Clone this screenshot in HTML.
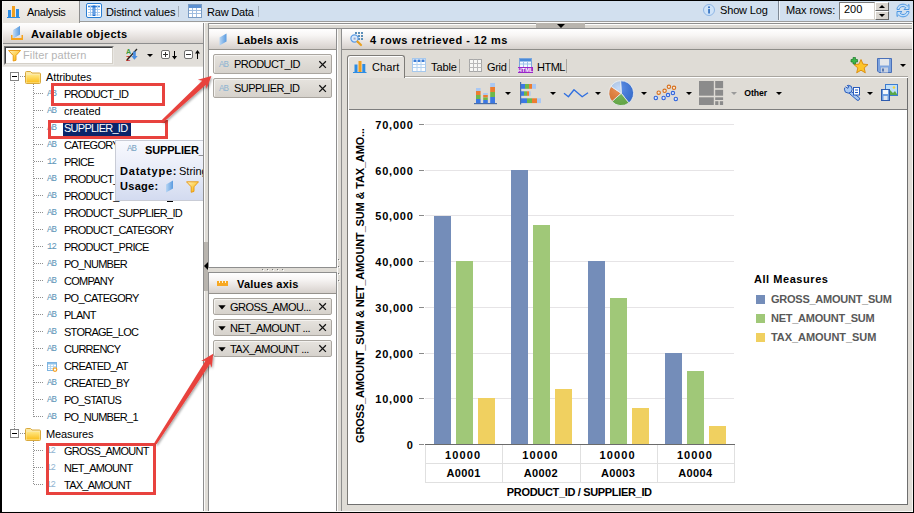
<!DOCTYPE html>
<html><head><meta charset="utf-8"><title>Analysis</title>
<style>
*{box-sizing:border-box;margin:0;padding:0}
html,body{width:914px;height:513px;overflow:hidden;background:#000}
body{font-family:"Liberation Sans",sans-serif;font-size:11px;color:#000;position:relative}
.a{position:absolute}
.tx{position:absolute;white-space:nowrap;line-height:13px;height:13px}
.b{font-weight:bold}
.hdr{background:linear-gradient(#ffffff 0%,#f8f6f5 30%,#e3dedb 75%,#d5d0cc 100%)}
.tree .tx{letter-spacing:-.74px}
.ic{position:absolute;left:47px;font-size:9px;color:#5c95b8;line-height:9px;height:9px;font-family:"Liberation Mono",monospace;letter-spacing:-.9px}
.dot{position:absolute;left:35px;width:9px;height:1px;background:repeating-linear-gradient(90deg,#999 0 1px,transparent 1px 2px)}
.chip{position:absolute;left:213px;width:119px;border:1px solid #aaa6a0;border-radius:2px;background:linear-gradient(#e6e3de,#d6d2cc);box-shadow:inset 1px 1px 0 #f4f2ef}
.chip .tx{letter-spacing:-.55px}
.x{position:absolute}
.dd{position:absolute;width:0;height:0;border-left:3.5px solid transparent;border-right:3.5px solid transparent;border-top:4px solid #000}
</style></head><body>
<!-- app background -->
<div class="a" style="left:2px;top:1px;width:911px;height:511px;background:#dfdcd6"></div>
<!-- top bar -->
<div class="a" style="left:2px;top:1px;width:911px;height:20px;background:#d2e0ef"></div>
<div class="a" style="left:2px;top:21px;width:911px;height:1px;background:#9c9c9c"></div>
<div class="a" style="left:2px;top:22px;width:911px;height:1px;background:#fbfbfa"></div>
<!-- active tab -->
<div class="a" style="left:3px;top:1px;width:77px;height:22px;background:linear-gradient(#f1efec,#e6e3de);border-right:1px solid #8e8e8e"></div>
<svg class="a" style="left:7px;top:4px" width="15" height="15" viewBox="0 0 15 15"><rect x="1" y="6" width="3" height="7" fill="#2d8de4"/><rect x="5" y="2" width="3" height="11" fill="#f0a020"/><rect x="9" y="5" width="3" height="8" fill="#2d8de4"/><rect x="0" y="13" width="13" height="1" fill="#2d8de4"/></svg>
<div class="tx" style="left:27px;top:6px;letter-spacing:-.3px">Analysis</div>
<!-- distinct values -->
<svg class="a" style="left:86px;top:3px" width="16" height="15" viewBox="0 0 16 15"><rect x=".5" y=".5" width="15" height="14" rx="1.5" fill="#fff" stroke="#2a7fd4"/><path d="M2 3.500h12" stroke="#3a86dc" stroke-width="1.600"/><path d="M2 6.500h12M2 9.500h12M2 12h12M4.500 2.500v10.500M11.500 2.500v10.500" stroke="#a9cbf0" stroke-width="1"/><rect x="6.600" y="2.500" width="2.800" height="10.500" fill="#1f6fd0"/><rect x="7.500" y="4.500" width="1" height="7.500" fill="#a9d0f8"/></svg>
<div class="tx" style="left:106px;top:6px;letter-spacing:-.1px">Distinct values</div>
<div class="a" style="left:178px;top:6px;width:1px;height:11px;background:#a3adb9"></div>
<svg class="a" style="left:188px;top:4px" width="14" height="14" viewBox="0 0 14 14"><rect x=".5" y=".5" width="13" height="13" fill="#fff" stroke="#7a9cc4"/><rect x="1" y="1" width="12" height="3" fill="#5b8fd0"/><g stroke="#9fbde0" stroke-width="1"><path d="M1 6.5h12M1 9.5h12M4.5 4v9M8.5 4v9"/></g></svg>
<div class="tx" style="left:207px;top:6px;letter-spacing:-.2px">Raw Data</div>
<div class="a" style="left:258px;top:6px;width:1px;height:11px;background:#a3adb9"></div>
<!-- right side -->
<svg class="a" style="left:703px;top:4px" width="12" height="12" viewBox="0 0 12 12"><circle cx="6" cy="6" r="5.500" fill="#cfe3f8" stroke="#8fb6e4"/><circle cx="6" cy="3.3" r="1" fill="#2f6fc0"/><rect x="5.2" y="5" width="1.7" height="4.5" fill="#2f6fc0"/></svg>
<div class="tx" style="left:720px;top:4px;letter-spacing:-.15px">Show Log</div>
<div class="a" style="left:778px;top:1px;width:1px;height:19px;background:#7f8995"></div>
<div class="a" style="left:779px;top:1px;width:1px;height:19px;background:#eef4fb"></div>
<div class="tx" style="left:786px;top:4px;letter-spacing:-.1px">Max rows:</div>
<div class="a" style="left:839px;top:2px;width:36px;height:18px;background:#fff;border:1px solid #7d7d7d;border-right-color:#d4d0c8;border-bottom-color:#d4d0c8"></div>
<div class="tx" style="left:844px;top:3px">200</div>
<div class="a" style="left:875px;top:2px;width:14px;height:9px;background:#d9d5cf;border:1px solid #fff;border-right-color:#666;border-bottom-color:#666"></div>
<div class="a" style="left:875px;top:11px;width:14px;height:9px;background:#d9d5cf;border:1px solid #fff;border-right-color:#666;border-bottom-color:#666"></div>
<div class="a" style="left:879px;top:5px;width:0;height:0;border-left:3px solid transparent;border-right:3px solid transparent;border-bottom:3px solid #000"></div>
<div class="a" style="left:879px;top:14px;width:0;height:0;border-left:3px solid transparent;border-right:3px solid transparent;border-top:3px solid #000"></div>
<svg class="a" style="left:896px;top:3px" width="14" height="15" viewBox="0 0 14 15"><g fill="#c4e0fa" stroke="#3f8fe0" stroke-width=".9" stroke-linejoin="round"><path id="ra" d="M1 6.500C1 3.200 4 1.200 7 1.200C9 1.200 10.500 2 11.300 3L13 1.500V6.500H8L9.800 4.700C9 3.900 8 3.500 7 3.500C5 3.500 3.300 4.800 3.300 6.500Z"/><path d="M1 6.500C1 3.200 4 1.200 7 1.200C9 1.200 10.500 2 11.300 3L13 1.500V6.500H8L9.800 4.700C9 3.900 8 3.500 7 3.500C5 3.500 3.300 4.800 3.300 6.500Z" transform="rotate(180 7 7.500)"/></g></svg>

<!--LEFT_S--><div class="a" style="left:2px;top:23px;width:201px;height:489px;background:#fff"></div>
<div class="a" style="left:203px;top:23px;width:1px;height:489px;background:#8e8e8e"></div>
<div class="a hdr" style="left:2px;top:23px;width:201px;height:20px"></div>
<div class="a" style="left:2px;top:43px;width:201px;height:1px;background:#8e8e8e"></div>
<div class="a" style="left:2px;top:44px;width:201px;height:23px;background:#e1ded9"></div>
<div class="a" style="left:2px;top:66px;width:201px;height:1px;background:#ebe9e5"></div>
<svg class="a" style="left:10px;top:25px" width="15" height="16" viewBox="0 0 15 16"><path d="M1 10v5h12v-5h-1.5v3h-9v-3z" fill="#f5a31f"/><path d="M3.5 5 L10 1 V9.5 L3.5 13z" fill="#8fbdec"/><path d="M3.5 5 L10 1 V9.5 L3.5 13z" fill="url(#gb)"/><defs><linearGradient id="gb" x1="0" x2="1"><stop offset="0" stop-color="#b8d6f4"/><stop offset="1" stop-color="#5a9be0"/></linearGradient></defs></svg>
<div class="tx b" style="left:31px;top:28px;letter-spacing:.42px">Available objects</div>
<div class="a" style="left:4px;top:46px;width:110px;height:19px;background:#fff;border:1px solid #7b7b7b;border-right-color:#e9e7e3;border-bottom-color:#e9e7e3"></div>
<div class="a" style="left:5px;top:47px;width:108px;height:17px;border:1px solid #3d3d3d;border-right-color:#d4d0c8;border-bottom-color:#d4d0c8"></div>
<svg class="a" style="left:8px;top:49px" width="13" height="13" viewBox="0 0 13 13"><path d="M.5 1.500h12L8 6.500v4.800L5.200 12V6.500z" fill="url(#gfu)" stroke="#e8960c" stroke-width=".9"/><defs><linearGradient id="gfu" x1="0" y1="0" x2="1" y2="1"><stop offset="0" stop-color="#fff3c4"/><stop offset=".6" stop-color="#fcc93a"/><stop offset="1" stop-color="#f7a81c"/></linearGradient></defs></svg>
<div class="tx" style="left:23px;top:49px;color:#b5b5b5;letter-spacing:.12px">Filter pattern</div>
<svg class="a" style="left:126px;top:48px" width="14" height="14" viewBox="0 0 14 14"><text x="0" y="6" font-size="7" font-weight="bold" fill="#3a9a3a" font-family="Liberation Sans">A</text><text x="0" y="13" font-size="7" font-weight="bold" fill="#c03030" font-family="Liberation Sans">Z</text><path d="M1 12 L11 1" stroke="#222" stroke-width="1.2"/><path d="M9 4v5h-2l3.5 4 3.5-4h-2V4z" fill="#4a8ee0" transform="translate(-1,0) scale(.9)"/></svg>
<div class="dd" style="left:147px;top:54px;border-left-width:3px;border-right-width:3px;border-top-width:3px"></div>
<div class="a" style="left:161px;top:50px;width:9px;height:9px;border:1px solid #6e6e6e;border-radius:2px;background:#fff"></div>
<div class="a" style="left:163px;top:54px;width:5px;height:1px;background:#333"></div>
<div class="a" style="left:165px;top:52px;width:1px;height:5px;background:#333"></div>
<svg class="a" style="left:171px;top:51px" width="7" height="9" viewBox="0 0 7 9"><path d="M3.500 0v6" stroke="#000" stroke-width="1"/><path d="M1 5h5L3.500 8.500z" fill="#000"/></svg>
<div class="a" style="left:184px;top:50px;width:9px;height:9px;border:1px solid #6e6e6e;border-radius:2px;background:#fff"></div>
<div class="a" style="left:186px;top:54px;width:5px;height:1px;background:#333"></div>
<svg class="a" style="left:194px;top:50px" width="7" height="9" viewBox="0 0 7 9"><path d="M3.500 3v6" stroke="#000" stroke-width="1"/><path d="M1 3.500h5L3.500 0z" fill="#000"/></svg>
<div class="tree">
<div class="a" style="left:14px;top:82px;width:1px;height:347px;background:repeating-linear-gradient(180deg,#8f8f8f 0 1px,transparent 1px 2px)"></div>
<div class="a" style="left:10px;top:72px;width:9px;height:9px;border:1px solid #848484;background:#fff"></div>
<div class="a" style="left:12px;top:76px;width:5px;height:1px;background:#000"></div>
<div class="a" style="left:20px;top:76px;width:5px;height:1px;background:repeating-linear-gradient(90deg,#8f8f8f 0 1px,transparent 1px 2px)"></div>
<svg class="a" style="left:25px;top:70px" width="16" height="14" viewBox="0 0 16 14"><path d="M.5 2.5a1 1 0 0 1 1-1h4l1.5 1.5h7.5a1 1 0 0 1 1 1v8.5a1 1 0 0 1-1 1h-13a1 1 0 0 1-1-1z" fill="#fce9a4" stroke="#d9a93c"/><path d="M1.5 5h13v7.5h-13z" fill="url(#gf)"/><defs><linearGradient id="gf" x1="0" y1="0" x2="0" y2="1"><stop offset="0" stop-color="#ffe680"/><stop offset="1" stop-color="#fbbf1e"/></linearGradient></defs></svg>
<div class="tx" style="left:46px;top:71px;letter-spacing:-.1px">Attributes</div>
<div class="a" style="left:33px;top:84px;width:1px;height:333px;background:repeating-linear-gradient(180deg,#8f8f8f 0 1px,transparent 1px 2px)"></div>
<div class="a" style="left:34px;top:93px;width:10px;height:1px;background:repeating-linear-gradient(90deg,#8f8f8f 0 1px,transparent 1px 2px)"></div>
<div class="ic" style="top:90px">AB</div>
<div class="tx" style="left:64px;top:88px">PRODUCT_ID</div>
<div class="a" style="left:34px;top:110px;width:10px;height:1px;background:repeating-linear-gradient(90deg,#8f8f8f 0 1px,transparent 1px 2px)"></div>
<div class="ic" style="top:107px">AB</div>
<div class="tx" style="left:64px;top:105px;letter-spacing:0">created</div>
<div class="a" style="left:34px;top:127px;width:10px;height:1px;background:repeating-linear-gradient(90deg,#8f8f8f 0 1px,transparent 1px 2px)"></div>
<div class="ic" style="top:124px">AB</div>
<div class="a" style="left:63px;top:122px;width:68px;height:14px;background:#0a246a"></div>
<div class="tx" style="left:64px;top:122px;color:#fff">SUPPLIER_ID</div>
<div class="a" style="left:34px;top:144px;width:10px;height:1px;background:repeating-linear-gradient(90deg,#8f8f8f 0 1px,transparent 1px 2px)"></div>
<div class="ic" style="top:141px">AB</div>
<div class="tx" style="left:64px;top:139px">CATEGORY</div>
<div class="a" style="left:34px;top:161px;width:10px;height:1px;background:repeating-linear-gradient(90deg,#8f8f8f 0 1px,transparent 1px 2px)"></div>
<div class="ic" style="top:158px">12</div>
<div class="tx" style="left:64px;top:156px">PRICE</div>
<div class="a" style="left:34px;top:178px;width:10px;height:1px;background:repeating-linear-gradient(90deg,#8f8f8f 0 1px,transparent 1px 2px)"></div>
<div class="ic" style="top:175px">AB</div>
<div class="tx" style="left:64px;top:173px">PRODUCT_</div>
<div class="a" style="left:34px;top:195px;width:10px;height:1px;background:repeating-linear-gradient(90deg,#8f8f8f 0 1px,transparent 1px 2px)"></div>
<div class="ic" style="top:192px">AB</div>
<div class="tx" style="left:64px;top:190px">PRODUCT_</div>
<div class="a" style="left:34px;top:212px;width:10px;height:1px;background:repeating-linear-gradient(90deg,#8f8f8f 0 1px,transparent 1px 2px)"></div>
<div class="ic" style="top:209px">AB</div>
<div class="tx" style="left:64px;top:207px">PRODUCT_SUPPLIER_ID</div>
<div class="a" style="left:34px;top:229px;width:10px;height:1px;background:repeating-linear-gradient(90deg,#8f8f8f 0 1px,transparent 1px 2px)"></div>
<div class="ic" style="top:226px">AB</div>
<div class="tx" style="left:64px;top:224px">PRODUCT_CATEGORY</div>
<div class="a" style="left:34px;top:246px;width:10px;height:1px;background:repeating-linear-gradient(90deg,#8f8f8f 0 1px,transparent 1px 2px)"></div>
<div class="ic" style="top:243px">12</div>
<div class="tx" style="left:64px;top:241px">PRODUCT_PRICE</div>
<div class="a" style="left:34px;top:263px;width:10px;height:1px;background:repeating-linear-gradient(90deg,#8f8f8f 0 1px,transparent 1px 2px)"></div>
<div class="ic" style="top:260px">AB</div>
<div class="tx" style="left:64px;top:258px">PO_NUMBER</div>
<div class="a" style="left:34px;top:280px;width:10px;height:1px;background:repeating-linear-gradient(90deg,#8f8f8f 0 1px,transparent 1px 2px)"></div>
<div class="ic" style="top:277px">AB</div>
<div class="tx" style="left:64px;top:275px">COMPANY</div>
<div class="a" style="left:34px;top:297px;width:10px;height:1px;background:repeating-linear-gradient(90deg,#8f8f8f 0 1px,transparent 1px 2px)"></div>
<div class="ic" style="top:294px">AB</div>
<div class="tx" style="left:64px;top:292px">PO_CATEGORY</div>
<div class="a" style="left:34px;top:314px;width:10px;height:1px;background:repeating-linear-gradient(90deg,#8f8f8f 0 1px,transparent 1px 2px)"></div>
<div class="ic" style="top:311px">AB</div>
<div class="tx" style="left:64px;top:309px">PLANT</div>
<div class="a" style="left:34px;top:331px;width:10px;height:1px;background:repeating-linear-gradient(90deg,#8f8f8f 0 1px,transparent 1px 2px)"></div>
<div class="ic" style="top:328px">AB</div>
<div class="tx" style="left:64px;top:326px">STORAGE_LOC</div>
<div class="a" style="left:34px;top:348px;width:10px;height:1px;background:repeating-linear-gradient(90deg,#8f8f8f 0 1px,transparent 1px 2px)"></div>
<div class="ic" style="top:345px">AB</div>
<div class="tx" style="left:64px;top:343px">CURRENCY</div>
<div class="a" style="left:34px;top:365px;width:10px;height:1px;background:repeating-linear-gradient(90deg,#8f8f8f 0 1px,transparent 1px 2px)"></div>
<svg class="a" style="left:47px;top:362px" width="11" height="11" viewBox="0 0 11 11"><rect x=".5" y=".5" width="9" height="8" fill="#fff" stroke="#7fb4e0"/><rect x="1" y="1" width="8" height="1.500" fill="#8ec2ea"/><path d="M1 4.500h8M1 6.500h8M3.500 2.500v6M6.500 2.500v6" stroke="#a9d0ee" stroke-width=".8"/><circle cx="8" cy="7.600" r="1.800" fill="#fff" stroke="#f5a020" stroke-width="1.200"/></svg>
<div class="tx" style="left:64px;top:360px">CREATED_AT</div>
<div class="a" style="left:34px;top:382px;width:10px;height:1px;background:repeating-linear-gradient(90deg,#8f8f8f 0 1px,transparent 1px 2px)"></div>
<div class="ic" style="top:379px">AB</div>
<div class="tx" style="left:64px;top:377px">CREATED_BY</div>
<div class="a" style="left:34px;top:399px;width:10px;height:1px;background:repeating-linear-gradient(90deg,#8f8f8f 0 1px,transparent 1px 2px)"></div>
<div class="ic" style="top:396px">AB</div>
<div class="tx" style="left:64px;top:394px">PO_STATUS</div>
<div class="a" style="left:34px;top:416px;width:10px;height:1px;background:repeating-linear-gradient(90deg,#8f8f8f 0 1px,transparent 1px 2px)"></div>
<div class="ic" style="top:413px">AB</div>
<div class="tx" style="left:64px;top:411px">PO_NUMBER_1</div>
<div class="a" style="left:10px;top:429px;width:9px;height:9px;border:1px solid #848484;background:#fff"></div>
<div class="a" style="left:12px;top:433px;width:5px;height:1px;background:#000"></div>
<div class="a" style="left:20px;top:433px;width:5px;height:1px;background:repeating-linear-gradient(90deg,#8f8f8f 0 1px,transparent 1px 2px)"></div>
<svg class="a" style="left:25px;top:427px" width="16" height="14" viewBox="0 0 16 14"><path d="M.5 2.5a1 1 0 0 1 1-1h4l1.5 1.5h7.5a1 1 0 0 1 1 1v8.5a1 1 0 0 1-1 1h-13a1 1 0 0 1-1-1z" fill="#fce9a4" stroke="#d9a93c"/><path d="M1.5 5h13v7.5h-13z" fill="url(#gf)"/><defs><linearGradient id="gf" x1="0" y1="0" x2="0" y2="1"><stop offset="0" stop-color="#ffe680"/><stop offset="1" stop-color="#fbbf1e"/></linearGradient></defs></svg>
<div class="tx" style="left:46px;top:428px;letter-spacing:-.1px">Measures</div>
<div class="a" style="left:33px;top:441px;width:1px;height:44px;background:repeating-linear-gradient(180deg,#8f8f8f 0 1px,transparent 1px 2px)"></div>
<div class="a" style="left:34px;top:450px;width:10px;height:1px;background:repeating-linear-gradient(90deg,#8f8f8f 0 1px,transparent 1px 2px)"></div>
<div class="ic" style="top:447px;left:46px;color:#8fb5d2">12</div>
<div class="tx" style="left:64px;top:445px">GROSS_AMOUNT</div>
<div class="a" style="left:34px;top:467px;width:10px;height:1px;background:repeating-linear-gradient(90deg,#8f8f8f 0 1px,transparent 1px 2px)"></div>
<div class="ic" style="top:464px;left:46px;color:#8fb5d2">12</div>
<div class="tx" style="left:64px;top:462px">NET_AMOUNT</div>
<div class="a" style="left:34px;top:484px;width:10px;height:1px;background:repeating-linear-gradient(90deg,#8f8f8f 0 1px,transparent 1px 2px)"></div>
<div class="ic" style="top:481px;left:46px;color:#8fb5d2">12</div>
<div class="tx" style="left:64px;top:479px">TAX_AMOUNT</div>
</div>
<div class="a" style="left:0;top:0;width:203px;height:513px;overflow:hidden">
<div class="a" style="left:115px;top:140px;width:88px;height:61px;background:linear-gradient(#f8f9fe,#e6eaf7 55%,#d3dbf0);border:1px solid #c9ccd6;border-right:none"></div>
<div class="ic" style="left:127px;top:145px;color:#7aa5c4">AB</div>
<div class="a" style="left:167px;top:201px;width:6px;height:1px;background:#000"></div>
<div class="tx b" style="left:145px;top:144px;letter-spacing:-.15px">SUPPLIER_</div>
<div class="tx b" style="left:120px;top:165px;letter-spacing:.8px">Datatype:</div>
<div class="tx" style="left:179px;top:165px">String</div>
<div class="tx b" style="left:120px;top:180px;letter-spacing:.3px">Usage:</div>
<svg class="a" style="left:165px;top:180px" width="9" height="13" viewBox="0 0 9 13"><path d="M1 4.5 L8 .5 V8.5 L1 12.5z" fill="url(#gb)"/></svg>
<svg class="a" style="left:186px;top:181px" width="13" height="12" viewBox="0 0 13 12"><path d="M.5 .8h12L8 5.800v4.600L5.200 11.300V5.800z" fill="url(#gfu)" stroke="#e8960c" stroke-width=".9"/></svg>
</div><!--LEFT_E-->
<!--MID_S--><div class="a" style="left:204px;top:23px;width:1px;height:488px;background:#fbfaf9"></div>
<div class="a" style="left:337px;top:29px;width:1px;height:482px;background:#fbfaf9"></div>
<div class="a" style="left:204px;top:242px;width:4px;height:49px;background:#b8b4ae"></div>
<div class="a" style="left:204px;top:262px;width:0;height:0;border-top:4px solid transparent;border-bottom:4px solid transparent;border-right:4px solid #000"></div>
<div class="a" style="left:208px;top:23px;width:705px;height:6px;background:linear-gradient(#fdfdfc 0,#fdfdfc 1px,#dddad4 1px,#dddad4 100%);border:1px solid #8e8e8e;border-bottom:none;border-right:none"></div>
<div class="a" style="left:208px;top:28px;width:129px;height:240px;background:#fff;border:1px solid #8e8e8e"></div>
<div class="a hdr" style="left:209px;top:29px;width:127px;height:20px"></div>
<div class="a" style="left:209px;top:49px;width:127px;height:1px;background:#95928d"></div>
<svg class="a" style="left:219px;top:33px" width="8" height="13" viewBox="0 0 8 13"><path d="M.5 4.5 L7.5 .5 V8.5 L.5 12.5z" fill="url(#gb)"/></svg>
<div class="tx b" style="left:237px;top:34px;letter-spacing:.2px">Labels axis</div>
<div class="a" style="left:208px;top:272px;width:129px;height:241px;background:#fff;border:1px solid #8e8e8e"></div>
<div class="a hdr" style="left:209px;top:273px;width:127px;height:20px"></div>
<div class="a" style="left:209px;top:293px;width:127px;height:1px;background:#95928d"></div>
<svg class="a" style="left:217px;top:281px" width="11" height="5" viewBox="0 0 11 5"><path d="M0 0h11v5H0z" fill="#f7a823"/><path d="M2.5 0v2M5.5 0v2M8.5 0v2" stroke="#fff3d6" stroke-width="1"/></svg>
<div class="tx b" style="left:237px;top:278px;letter-spacing:.2px">Values axis</div>
<div class="a" style="left:262px;top:269px;width:22px;height:1px;background:repeating-linear-gradient(90deg,#777 0 1px,transparent 1px 5px)"></div>
<div class="a" style="left:263px;top:270px;width:22px;height:1px;background:repeating-linear-gradient(90deg,#fff 0 1px,transparent 1px 5px)"></div>
<div class="a" style="left:338px;top:259px;width:1px;height:22px;background:repeating-linear-gradient(180deg,#777 0 1px,transparent 1px 7px)"></div>
<div class="a" style="left:339px;top:260px;width:1px;height:22px;background:repeating-linear-gradient(180deg,#fff 0 1px,transparent 1px 7px)"></div>
<div class="chip" style="top:54px;height:20px">
<div class="ic" style="left:5px;top:6px;color:#8fb5d2;font-size:9px;letter-spacing:-.9px">AB</div>
<div class="tx" style="left:20px;top:3px">PRODUCT_ID</div>
<svg class="a" style="left:104px;top:5px" width="9" height="9" viewBox="0 0 9 9"><path d="M1.300 1.300l6.600 6.600M7.900 1.300l-6.600 6.600" stroke="#111" stroke-width="1.25"/></svg>
</div>
<div class="chip" style="top:78px;height:20px">
<div class="ic" style="left:5px;top:6px;color:#8fb5d2;font-size:9px;letter-spacing:-.9px">AB</div>
<div class="tx" style="left:20px;top:3px">SUPPLIER_ID</div>
<svg class="a" style="left:104px;top:5px" width="9" height="9" viewBox="0 0 9 9"><path d="M1.300 1.300l6.600 6.600M7.900 1.300l-6.600 6.600" stroke="#111" stroke-width="1.25"/></svg>
</div>
<div class="chip" style="top:298px;height:17px">
<svg class="a" style="left:4px;top:6px" width="8" height="5" viewBox="0 0 8 5"><path d="M.3 .3h7.400L4 4.500z" fill="#000"/></svg>
<div class="tx" style="left:16px;top:2px">GROSS_AMOU...</div>
<svg class="a" style="left:104px;top:3px" width="9" height="9" viewBox="0 0 9 9"><path d="M1.300 1.300l6.600 6.600M7.900 1.300l-6.600 6.600" stroke="#111" stroke-width="1.25"/></svg>
</div>
<div class="chip" style="top:319px;height:17px">
<svg class="a" style="left:4px;top:6px" width="8" height="5" viewBox="0 0 8 5"><path d="M.3 .3h7.400L4 4.500z" fill="#000"/></svg>
<div class="tx" style="left:16px;top:2px">NET_AMOUNT ...</div>
<svg class="a" style="left:104px;top:3px" width="9" height="9" viewBox="0 0 9 9"><path d="M1.300 1.300l6.600 6.600M7.900 1.300l-6.600 6.600" stroke="#111" stroke-width="1.25"/></svg>
</div>
<div class="chip" style="top:340px;height:17px">
<svg class="a" style="left:4px;top:6px" width="8" height="5" viewBox="0 0 8 5"><path d="M.3 .3h7.400L4 4.500z" fill="#000"/></svg>
<div class="tx" style="left:16px;top:2px">TAX_AMOUNT ...</div>
<svg class="a" style="left:104px;top:3px" width="9" height="9" viewBox="0 0 9 9"><path d="M1.300 1.300l6.600 6.600M7.900 1.300l-6.600 6.600" stroke="#111" stroke-width="1.25"/></svg>
</div><!--MID_E-->
<!--CHART_S--><div class="a" style="left:536px;top:23px;width:49px;height:5px;background:#b8b4ae"></div>
<div class="a" style="left:557px;top:24px;width:0;height:0;border-left:4px solid transparent;border-right:4px solid transparent;border-top:4px solid #000"></div>
<div class="a" style="left:341px;top:28px;width:572px;height:485px;background:#dfdcd6;border:1px solid #8e8e8e;border-right:none;border-bottom:none"></div>
<div class="a hdr" style="left:342px;top:29px;width:571px;height:20px"></div>
<div class="a" style="left:342px;top:49px;width:571px;height:1px;background:#8e8c88"></div>
<svg class="a" style="left:350px;top:32px" width="14" height="15" viewBox="0 0 14 15"><g fill="#5d8fb8"><rect x="5" y="0" width="2" height="2"/><rect x="8" y="0" width="2" height="2"/><rect x="11" y="0" width="2" height="2"/><rect x="8" y="3" width="2" height="2"/><rect x="11" y="3" width="2" height="2"/><rect x="11" y="6" width="2" height="2"/><rect x="8" y="6" width="2" height="2"/></g><circle cx="4.5" cy="6.5" r="3.6" fill="#dcebfa" stroke="#5b9be6" stroke-width="1.2"/><rect x="3.6" y="5.6" width="2" height="2" fill="#9aa4c8"/><path d="M7.5 9.5l3.5 3.5" stroke="#e8a020" stroke-width="2.2" stroke-linecap="round"/></svg>
<div class="tx b" style="left:370px;top:34px;letter-spacing:.52px">4 rows retrieved - 12 ms</div>
<div class="a" style="left:348px;top:77px;width:560px;height:1px;background:#fff"></div>
<div class="a" style="left:347px;top:55px;width:58px;height:23px;background:#e4e1dc;border:1px solid #7d7b77;border-bottom:none;border-radius:3px 3px 0 0;box-shadow:inset 1px 1px 0 #fff"></div>
<div class="a" style="left:347px;top:78px;width:1px;height:427px;background:#7d7b77"></div>
<div class="a" style="left:348px;top:78px;width:1px;height:426px;background:#fff"></div>
<div class="a" style="left:907px;top:78px;width:1px;height:427px;background:#6f6f6f"></div>
<div class="a" style="left:347px;top:504px;width:561px;height:1px;background:#6f6f6f"></div>
<div class="a" style="left:349px;top:109px;width:558px;height:1px;background:#7e7e7e"></div>
<div class="a" style="left:349px;top:110px;width:558px;height:394px;background:#fff"></div>
<div class="a" style="left:342px;top:511px;width:571px;height:1px;background:#f6f5f3"></div>
<div class="a" style="left:912px;top:23px;width:1px;height:489px;background:#f6f5f3"></div>
<div class="a" style="left:405px;top:76px;width:503px;height:1px;background:#a9a6a0"></div>
<div class="a" style="left:337px;top:28px;width:4px;height:1px;background:#8e8e8e"></div>
<svg class="a" style="left:353px;top:60px" width="14" height="14" viewBox="0 0 14 14"><rect x="1.500" y="4.500" width="3" height="7.500" fill="#2d8de4"/><rect x="5.500" y="1" width="3" height="11" fill="#f0a020"/><rect x="9.300" y="4" width="3" height="8" fill="#2d8de4"/><rect x="0" y="12" width="13.500" height="1" fill="#2d8de4"/></svg>
<div class="tx" style="left:372px;top:61px;letter-spacing:.1px">Chart</div>
<svg class="a" style="left:412px;top:58px" width="14" height="14" viewBox="0 0 14 14"><rect x=".5" y=".5" width="13" height="13" fill="#fbfdff" stroke="#a6c8ec"/><rect x="1.500" y="1.500" width="3" height="2.500" fill="#3d7fd8"/><rect x="5.500" y="1.500" width="3" height="2.500" fill="#3d7fd8"/><rect x="9.500" y="1.500" width="3" height="2.500" fill="#3d7fd8"/><path d="M1 6.500h12M1 9.500h12M5 4v9M9 4v9" stroke="#b4d2f0" stroke-width="1"/></svg>
<div class="tx" style="left:431px;top:61px;letter-spacing:-.1px">Table</div>
<div class="a" style="left:459px;top:59px;width:1px;height:14px;background:#a9a6a0"></div>
<svg class="a" style="left:469px;top:59px" width="13" height="13" viewBox="0 0 13 13"><rect x=".5" y=".5" width="12" height="12" fill="#f7f7f5" stroke="#a8a8a8"/><path d="M.5 4.5h12M.5 8.5h12M4.5 .5v12M8.5 .5v12" stroke="#b8b8b8" stroke-width="1"/></svg>
<div class="tx" style="left:487px;top:61px;letter-spacing:-.3px">Grid</div>
<div class="a" style="left:509px;top:59px;width:1px;height:14px;background:#a9a6a0"></div>
<svg class="a" style="left:518px;top:58px" width="15" height="16" viewBox="0 0 15 16"><rect x="1.5" y=".5" width="12" height="9" fill="#f4f9ff" stroke="#7aa6dc"/><rect x="2" y="1" width="11" height="2.5" fill="#4a8ad8"/><path d="M2 6h11M5.5 3.5v6M9.5 3.5v6" stroke="#9cc0ea" stroke-width="1"/><rect x="0" y="9" width="15" height="6" fill="#9a28c8"/><text x="7.5" y="14" font-size="5.5" font-weight="bold" fill="#fff" text-anchor="middle" font-family="Liberation Sans">HTML</text></svg>
<div class="tx" style="left:537px;top:61px;letter-spacing:-.5px">HTML</div>
<div class="a" style="left:566px;top:59px;width:1px;height:14px;background:#a9a6a0"></div>
<svg class="a" style="left:850px;top:56px" width="19" height="18" viewBox="0 0 19 18"><path d="M11 3.5l2 4.6 5 .5-3.8 3.3 1.1 4.9L11 14.2 6.7 16.8l1.1-4.9L4 8.600l5-.5z" fill="#fdc52a" stroke="#d98a0a" stroke-width=".9"/><path d="M3 1.5h2.500v2h2v2.500h-2v2H3v-2H1V3.500h2z" fill="#3cb84a" stroke="#1d7a2a" stroke-width=".7"/></svg>
<svg class="a" style="left:877px;top:58px" width="15" height="15" viewBox="0 0 15 15"><path d="M.5 .5h14v14H2l-1.500-1.500z" fill="#7ea4de" stroke="#4a70b8"/><rect x="3" y="1" width="9" height="6.500" fill="#e4e6ea"/><rect x="4" y="9.500" width="7" height="5" fill="#c9d2e2"/><rect x="5" y="10.500" width="2" height="3" fill="#5a78b0"/></svg>
<div class="dd" style="left:900px;top:64px;border-left-width:3px;border-right-width:3px;border-top-width:3px"></div>
<svg class="a" style="left:0;top:0" width="914" height="513" viewBox="0 0 914 513"><rect x="476" y="88" width="4.6" height="3" fill="#a9c8f4"/><rect x="476" y="91" width="4.6" height="4" fill="#ec7c30"/><rect x="476" y="95" width="4.6" height="4" fill="#6db84a"/><rect x="476" y="99" width="4.6" height="4" fill="#3b78e4"/><rect x="483.2" y="93" width="4.6" height="2" fill="#a9c8f4"/><rect x="483.2" y="95" width="4.6" height="2.5" fill="#ec7c30"/><rect x="483.2" y="97.5" width="4.6" height="2.5" fill="#6db84a"/><rect x="483.2" y="100" width="4.6" height="3" fill="#3b78e4"/><rect x="490.2" y="83" width="4.8" height="4" fill="#a9c8f4"/><rect x="490.2" y="87" width="4.8" height="5" fill="#ec7c30"/><rect x="490.2" y="92" width="4.8" height="5" fill="#6db84a"/><rect x="490.2" y="97" width="4.8" height="6" fill="#3b78e4"/><rect x="474" y="103" width="23" height="1.2" fill="#4a6ea8"/><rect x="521" y="84" width="4" height="4.8" fill="#3b78e4"/><rect x="525" y="84" width="4" height="4.8" fill="#6db84a"/><rect x="529" y="84" width="3" height="4.8" fill="#ec7c30"/><rect x="532" y="84" width="4" height="4.8" fill="#a9c8f4"/><rect x="521" y="91.3" width="3" height="4.5" fill="#3b78e4"/><rect x="524" y="91.3" width="3" height="4.5" fill="#6db84a"/><rect x="527" y="91.3" width="2" height="4.5" fill="#ec7c30"/><rect x="529" y="91.3" width="1.6000000000000227" height="4.5" fill="#a9c8f4"/><rect x="521" y="98.3" width="6" height="4.8" fill="#3b78e4"/><rect x="527" y="98.3" width="5" height="4.8" fill="#6db84a"/><rect x="532" y="98.3" width="5" height="4.8" fill="#ec7c30"/><rect x="537" y="98.3" width="4" height="4.8" fill="#a9c8f4"/><rect x="520" y="82" width="1.2" height="22.5" fill="#4a6ea8"/><path d="M564 93.3L568.4 96.7L574 89.8L582.2 96.7L588 92.7" fill="none" stroke="#2f6fe0" stroke-width="1.35" stroke-linejoin="round"/><defs><radialGradient id="pg" cx=".4" cy=".3" r=".8"><stop offset="0" stop-color="#fff" stop-opacity=".22"/><stop offset="1" stop-color="#000" stop-opacity=".12"/></radialGradient></defs><path d="M621.2 93.2L620.55 80.82A12.4 12.4 0 0 1 628.83 102.97Z" fill="#3a78e6" stroke="#f2f6fb" stroke-width=".9" stroke-linejoin="round"/><path d="M621.2 93.2L628.83 102.97A12.4 12.4 0 0 1 611.99 101.50Z" fill="#6cb84a" stroke="#f2f6fb" stroke-width=".9" stroke-linejoin="round"/><path d="M621.2 93.2L611.99 101.50A12.4 12.4 0 0 1 610.92 86.27Z" fill="#ec7c30" stroke="#f2f6fb" stroke-width=".9" stroke-linejoin="round"/><path d="M621.2 93.2L610.92 86.27A12.4 12.4 0 0 1 620.55 80.82Z" fill="#b4d0f6" stroke="#f2f6fb" stroke-width=".9" stroke-linejoin="round"/><circle cx="621.2" cy="93.2" r="12.4" fill="url(#pg)"/><circle cx="658.7" cy="92.7" r="1.7" fill="#f8e8d8" stroke="#d8701c" stroke-width="1.1"/><circle cx="664.6" cy="90.8" r="1.7" fill="#f8e8d8" stroke="#d8701c" stroke-width="1.1"/><circle cx="668.9" cy="86.8" r="1.7" fill="#f8e8d8" stroke="#d8701c" stroke-width="1.1"/><circle cx="674" cy="87.8" r="1.7" fill="#f8e8d8" stroke="#d8701c" stroke-width="1.1"/><circle cx="655.8" cy="98" r="1.7" fill="#dce8fb" stroke="#2f63dc" stroke-width="1.1"/><circle cx="663.6" cy="98" r="1.7" fill="#dce8fb" stroke="#2f63dc" stroke-width="1.1"/><circle cx="668" cy="95.1" r="1.7" fill="#dce8fb" stroke="#2f63dc" stroke-width="1.1"/><circle cx="672.9" cy="93.1" r="1.7" fill="#dce8fb" stroke="#2f63dc" stroke-width="1.1"/><circle cx="675.8" cy="99" r="1.7" fill="#dce8fb" stroke="#2f63dc" stroke-width="1.1"/><rect x="699" y="81" width="14.8" height="14.7" fill="#8b8b8b"/><rect x="699" y="97.3" width="14.8" height="7.7" fill="#8b8b8b"/><rect x="715.2" y="81" width="7.9" height="7.2" fill="#8b8b8b"/><rect x="715.2" y="89.8" width="7.9" height="5.9" fill="#8b8b8b"/><rect x="715.2" y="97.3" width="7.9" height="2.7" fill="#8b8b8b"/><rect x="715.2" y="101.2" width="3.2" height="3.8" fill="#8b8b8b"/><rect x="719.8" y="101.2" width="3.3" height="3.8" fill="#8b8b8b"/></svg>
<div class="dd" style="left:505px;top:92px;border-left-width:3px;border-right-width:3px;border-top-width:3px;border-top-color:#000"></div>
<div class="dd" style="left:550px;top:92px;border-left-width:3px;border-right-width:3px;border-top-width:3px;border-top-color:#000"></div>
<div class="dd" style="left:595px;top:92px;border-left-width:3px;border-right-width:3px;border-top-width:3px;border-top-color:#000"></div>
<div class="dd" style="left:640.5px;top:92px;border-left-width:3px;border-right-width:3px;border-top-width:3px;border-top-color:#000"></div>
<div class="dd" style="left:685.5px;top:92px;border-left-width:3px;border-right-width:3px;border-top-width:3px;border-top-color:#000"></div>
<div class="dd" style="left:731px;top:92px;border-left-width:3px;border-right-width:3px;border-top-width:3px;border-top-color:#9a9a9a"></div>
<div class="tx b" style="left:744.3px;top:86.5px;font-size:8.700px;letter-spacing:-.1px">Other</div>
<div class="dd" style="left:775.5px;top:92px;border-left-width:3px;border-right-width:3px;border-top-width:3px;border-top-color:#000"></div>
<svg class="a" style="left:840px;top:80px" width="24" height="24" viewBox="840 80 24 24"><path d="M850 90.500L859.300 97.700a1.700 1.700 0 0 1-2.300 2.400L848.300 92.500z" fill="#a9c9f2" stroke="#2a5cbc" stroke-width="1"/><circle cx="848.300" cy="89.200" r="3.900" fill="#a9c9f2" stroke="#2a5cbc" stroke-width="1"/><path d="M848.300 89.200L842 86.500L845.500 82z" fill="#dfdcd6"/><path d="M845.300 86.800l2.600 1.600 1-2.800" fill="none" stroke="#2a5cbc" stroke-width="1"/><rect x="853.500" y="87.500" width="6" height="7.500" fill="#fff" stroke="#2a5cbc" stroke-width="1"/><path d="M855 90h3M855 92.500h3" stroke="#2a5cbc" stroke-width="1"/></svg>
<div class="dd" style="left:867px;top:92px;border-left-width:3px;border-right-width:3px;border-top-width:3px;border-top-color:#000"></div>
<svg class="a" style="left:881px;top:84px" width="17" height="17" viewBox="0 0 17 17"><rect x="4.500" y=".500" width="12" height="11" fill="#bfe0f8" stroke="#3b7bd0"/><path d="M5 11l4-5 3 3 2-2 2.500 4z" fill="#5aa848"/><circle cx="13" cy="3.500" r="1.300" fill="#f6d23c"/><rect x=".500" y="5.500" width="8" height="11" fill="#6f9fe0" stroke="#2f5cae"/><rect x="2" y="6" width="5" height="4" fill="#f4f7fc"/><rect x="2.500" y="12" width="4" height="4" fill="#dfe6f2"/></svg>
<div class="a" style="left:419px;top:444px;width:5px;height:1px;background:#8a8a8a"></div>
<div class="tx b cl" style="left:350px;width:63.600px;text-align:right;top:439px;letter-spacing:.78px;margin-right:-.78px">0</div>
<div class="a" style="left:425px;top:398px;width:309px;height:1px;background:#e6e4e6"></div>
<div class="a" style="left:419px;top:398px;width:5px;height:1px;background:#8a8a8a"></div>
<div class="tx b cl" style="left:350px;width:63.600px;text-align:right;top:393px;letter-spacing:.78px;margin-right:-.78px">10,000</div>
<div class="a" style="left:425px;top:353px;width:309px;height:1px;background:#e6e4e6"></div>
<div class="a" style="left:419px;top:353px;width:5px;height:1px;background:#8a8a8a"></div>
<div class="tx b cl" style="left:350px;width:63.600px;text-align:right;top:348px;letter-spacing:.78px;margin-right:-.78px">20,000</div>
<div class="a" style="left:425px;top:307px;width:309px;height:1px;background:#e6e4e6"></div>
<div class="a" style="left:419px;top:307px;width:5px;height:1px;background:#8a8a8a"></div>
<div class="tx b cl" style="left:350px;width:63.600px;text-align:right;top:302px;letter-spacing:.78px;margin-right:-.78px">30,000</div>
<div class="a" style="left:425px;top:261px;width:309px;height:1px;background:#e6e4e6"></div>
<div class="a" style="left:419px;top:261px;width:5px;height:1px;background:#8a8a8a"></div>
<div class="tx b cl" style="left:350px;width:63.600px;text-align:right;top:256px;letter-spacing:.78px;margin-right:-.78px">40,000</div>
<div class="a" style="left:425px;top:215px;width:309px;height:1px;background:#e6e4e6"></div>
<div class="a" style="left:419px;top:215px;width:5px;height:1px;background:#8a8a8a"></div>
<div class="tx b cl" style="left:350px;width:63.600px;text-align:right;top:210px;letter-spacing:.78px;margin-right:-.78px">50,000</div>
<div class="a" style="left:425px;top:170px;width:309px;height:1px;background:#e6e4e6"></div>
<div class="a" style="left:419px;top:170px;width:5px;height:1px;background:#8a8a8a"></div>
<div class="tx b cl" style="left:350px;width:63.600px;text-align:right;top:165px;letter-spacing:.78px;margin-right:-.78px">60,000</div>
<div class="a" style="left:425px;top:124px;width:309px;height:1px;background:#e6e4e6"></div>
<div class="a" style="left:419px;top:124px;width:5px;height:1px;background:#8a8a8a"></div>
<div class="tx b cl" style="left:350px;width:63.600px;text-align:right;top:119px;letter-spacing:.78px;margin-right:-.78px">70,000</div>
<div class="a" style="left:434px;top:215.60px;width:17px;height:228.40px;background:#748db9"></div>
<div class="a" style="left:456px;top:261.32px;width:17px;height:182.68px;background:#a0c878"></div>
<div class="a" style="left:478px;top:398.48px;width:17px;height:45.52px;background:#f0d060"></div>
<div class="a" style="left:511px;top:169.88px;width:17px;height:274.12px;background:#748db9"></div>
<div class="a" style="left:533px;top:224.74px;width:17px;height:219.26px;background:#a0c878"></div>
<div class="a" style="left:555px;top:389.34px;width:17px;height:54.66px;background:#f0d060"></div>
<div class="a" style="left:588px;top:261.32px;width:17px;height:182.68px;background:#748db9"></div>
<div class="a" style="left:610px;top:297.90px;width:17px;height:146.10px;background:#a0c878"></div>
<div class="a" style="left:632px;top:407.62px;width:17px;height:36.38px;background:#f0d060"></div>
<div class="a" style="left:665px;top:352.76px;width:17px;height:91.24px;background:#748db9"></div>
<div class="a" style="left:687px;top:371.05px;width:17px;height:72.95px;background:#a0c878"></div>
<div class="a" style="left:709px;top:425.91px;width:17px;height:18.09px;background:#f0d060"></div>
<div class="a" style="left:425px;top:444px;width:310px;height:1px;background:#6b6b6b"></div>
<div class="a" style="left:425px;top:463px;width:310px;height:1px;background:#e0e0e0"></div>
<div class="a" style="left:425px;top:482px;width:310px;height:1px;background:#e0e0e0"></div>
<div class="a" style="left:425px;top:445px;width:1px;height:38px;background:#e0e0e0"></div>
<div class="a" style="left:502px;top:445px;width:1px;height:38px;background:#e0e0e0"></div>
<div class="a" style="left:580px;top:445px;width:1px;height:38px;background:#e0e0e0"></div>
<div class="a" style="left:657px;top:445px;width:1px;height:38px;background:#e0e0e0"></div>
<div class="a" style="left:734px;top:445px;width:1px;height:38px;background:#e0e0e0"></div>
<div class="tx b" style="left:425.0px;width:77.25px;text-align:center;top:449px;letter-spacing:1.1px;margin-left:-.5px">10000</div>
<div class="tx b" style="left:425.0px;width:77.25px;text-align:center;top:467px;letter-spacing:.35px">A0001</div>
<div class="tx b" style="left:502.2px;width:77.25px;text-align:center;top:449px;letter-spacing:1.1px;margin-left:-.5px">10000</div>
<div class="tx b" style="left:502.2px;width:77.25px;text-align:center;top:467px;letter-spacing:.35px">A0002</div>
<div class="tx b" style="left:579.5px;width:77.25px;text-align:center;top:449px;letter-spacing:1.1px;margin-left:-.5px">10000</div>
<div class="tx b" style="left:579.5px;width:77.25px;text-align:center;top:467px;letter-spacing:.35px">A0003</div>
<div class="tx b" style="left:656.8px;width:77.25px;text-align:center;top:449px;letter-spacing:1.1px;margin-left:-.5px">10000</div>
<div class="tx b" style="left:656.8px;width:77.25px;text-align:center;top:467px;letter-spacing:.35px">A0004</div>
<div class="tx b" style="left:429.300px;width:300px;text-align:center;top:486px;letter-spacing:-.33px">PRODUCT_ID / SUPPLIER_ID</div>
<div class="tx b" style="left:204px;width:313px;text-align:center;top:279.5px;transform:rotate(-90deg);transform-origin:center;letter-spacing:-.155px">GROSS_AMOUNT_SUM &amp; NET_AMOUNT_SUM &amp; TAX_AMO...</div>
<div class="tx b" style="left:754px;top:273px;letter-spacing:.55px">All Measures</div>
<div class="a" style="left:756px;top:295px;width:9px;height:9px;background:#748db9"></div>
<div class="tx b" style="left:771px;top:293px;color:#595959;letter-spacing:-0.25px">GROSS_AMOUNT_SUM</div>
<div class="a" style="left:756px;top:314px;width:9px;height:9px;background:#a0c878"></div>
<div class="tx b" style="left:771px;top:312px;color:#595959;letter-spacing:-0.25px">NET_AMOUNT_SUM</div>
<div class="a" style="left:756px;top:333px;width:9px;height:9px;background:#f0d060"></div>
<div class="tx b" style="left:771px;top:331px;color:#595959;letter-spacing:-0.06px">TAX_AMOUNT_SUM</div><!--CHART_E-->
<!--ANNOT_S--><div class="a" style="left:2px;top:511px;width:911px;height:1px;background:#fbfaf9"></div>
<div class="a" style="left:0;top:512px;width:914px;height:1px;background:#000"></div>
<div class="a" style="left:913px;top:0;width:1px;height:513px;background:#000"></div>
<div class="a" style="left:2px;top:1px;width:1px;height:66px;background:#f6f5f3"></div>
<div class="a" style="left:51px;top:83px;width:114px;height:23px;border:3px solid #e8423e"></div>
<div class="a" style="left:48px;top:119.5px;width:120px;height:19.5px;border:3px solid #e8423e"></div>
<div class="a" style="left:46px;top:443px;width:110px;height:52px;border:3px solid #e8423e"></div>
<svg class="a" style="left:0;top:0;pointer-events:none" width="914" height="513" viewBox="0 0 914 513"><defs><filter id="sh" x="-20%" y="-20%" width="140%" height="140%"><feDropShadow dx="1" dy="1.5" stdDeviation="1" flood-color="#000" flood-opacity=".35"/></filter></defs>
<polygon points="163.4,122.2 205.9,84.7 206.5,89.0 211.4,75.9 197.9,79.8 202.2,80.7 161.6,120.2" fill="#e8423e" filter="url(#sh)"/>
<polygon points="156.6,444.2 210.1,363.7 211.7,367.7 213.2,353.8 201.1,360.9 205.5,360.7 154.4,442.8" fill="#e8423e" filter="url(#sh)"/>
</svg><!--ANNOT_E-->
</body></html>
